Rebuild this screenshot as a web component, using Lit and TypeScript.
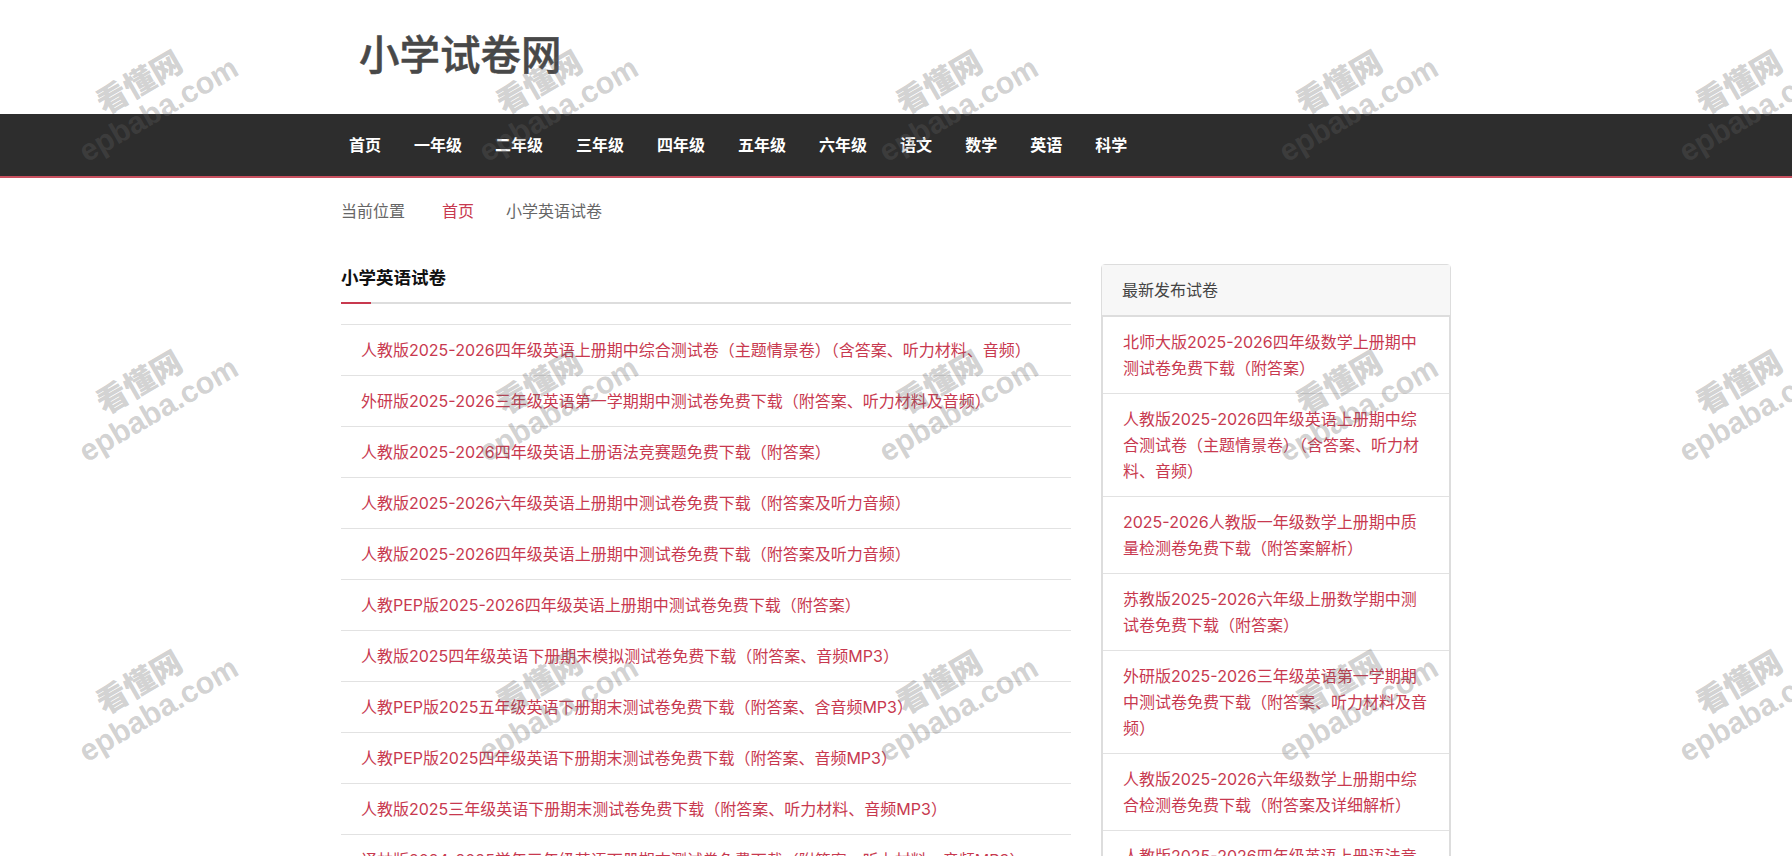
import { LitElement, html, css } from 'lit';
import { customElement } from 'lit/decorators.js';

const NAV = ['首页', '一年级', '二年级', '三年级', '四年级', '五年级', '六年级', '语文', '数学', '英语', '科学'];

const PAPERS = [
  '人教版2025-2026四年级英语上册期中综合测试卷（主题情景卷）（含答案、听力材料、音频）',
  '外研版2025-2026三年级英语第一学期期中测试卷免费下载（附答案、听力材料及音频）',
  '人教版2025-2026四年级英语上册语法竞赛题免费下载（附答案）',
  '人教版2025-2026六年级英语上册期中测试卷免费下载（附答案及听力音频）',
  '人教版2025-2026四年级英语上册期中测试卷免费下载（附答案及听力音频）',
  '人教PEP版2025-2026四年级英语上册期中测试卷免费下载（附答案）',
  '人教版2025四年级英语下册期末模拟测试卷免费下载（附答案、音频MP3）',
  '人教PEP版2025五年级英语下册期末测试卷免费下载（附答案、含音频MP3）',
  '人教PEP版2025四年级英语下册期末测试卷免费下载（附答案、音频MP3）',
  '人教版2025三年级英语下册期末测试卷免费下载（附答案、听力材料、音频MP3）',
  '译林版2024-2025学年三年级英语下册期末测试卷免费下载（附答案、听力材料、音频MP3）',
];

const LATEST = [
  '北师大版2025-2026四年级数学上册期中测试卷免费下载（附答案）',
  '人教版2025-2026四年级英语上册期中综合测试卷（主题情景卷）（含答案、听力材料、音频）',
  '2025-2026人教版一年级数学上册期中质量检测卷免费下载（附答案解析）',
  '苏教版2025-2026六年级上册数学期中测试卷免费下载（附答案）',
  '外研版2025-2026三年级英语第一学期期中测试卷免费下载（附答案、听力材料及音频）',
  '人教版2025-2026六年级数学上册期中综合检测卷免费下载（附答案及详细解析）',
  '人教版2025-2026四年级英语上册语法竞赛题免费下载（附答案）',
];

@customElement('app-root')
export class AppRoot extends LitElement {
  static styles = css`
    :host {
      display: block;
      position: relative;
      height: 856px;
      overflow: hidden;
      background: #fff;
      font-family: Inter, 'Noto Sans CJK SC', sans-serif;
      font-size: 16px;
      line-height: 26px;
      color: #555;
    }

    a {
      color: #c8394f;
      text-decoration: none;
    }

    .header {
      height: 114px;
      padding: 0 0 0 359px;
      display: flex;
      align-items: center;
      box-sizing: border-box;
    }

    .logo {
      font-size: 40.5px;
      line-height: 1;
      font-weight: 500;
      -webkit-text-stroke: 0.5px #484848;
      color: #484848;
      padding-bottom: 2px;
    }

    .nav {
      height: 64px;
      box-sizing: border-box;
      background: #2d2d2d;
      border-bottom: 2px solid #c9505f;
      padding-left: 332.5px;
      display: flex;
      align-items: center;
    }

    .nav a {
      padding: 0 16.5px;
      color: #fff;
      font-weight: 700;
    }

    .crumbs {
      height: 66px;
      padding-left: 341px;
      display: flex;
      align-items: center;
      color: #666;
    }

    .crumbs a {
      margin: 0 32px 0 37px;
    }

    .main {
      margin: 20px 341px 0;
      display: flex;
      gap: 30px;
    }

    .content {
      width: 730px;
      flex: none;
    }

    .title {
      position: relative;
      height: 40px;
      box-sizing: border-box;
      border-bottom: 2px solid #ddd;
      margin-bottom: 20px;
      font-size: 17.5px;
      font-weight: 700;
      color: #111;
      line-height: 28px;
    }

    .title::after {
      content: '';
      position: absolute;
      left: 0;
      bottom: -2px;
      width: 30px;
      height: 2px;
      background: #c8394f;
    }

    .rows {
      border-top: 1px solid #e2e2e2;
    }

    .rows a {
      display: block;
      height: 51px;
      box-sizing: border-box;
      padding: 12px 20px;
      border-bottom: 1px solid #e2e2e2;
      white-space: nowrap;
    }

    .side {
      width: 350px;
      flex: none;
      box-sizing: border-box;
      border: 1px solid #ddd;
      border-radius: 4px 4px 0 0;
    }

    .side-head {
      height: 51px;
      box-sizing: border-box;
      padding: 12px 20px;
      background: #f7f7f7;
      border-bottom: 1px solid #ddd;
      color: #444;
    }

    .side-list {
      border-left: 1px solid #ddd;
      border-right: 1px solid #ddd;
      border-top: 1px solid #ddd;
    }

    .side-list a {
      display: block;
      padding: 12px 19px 12px 20px;
      border-bottom: 1px solid #e2e2e2;
    }

    .marks {
      position: absolute;
      left: -50px;
      top: -55px;
      display: grid;
      grid-template-columns: repeat(5, 400px);
      grid-auto-rows: 300px;
      pointer-events: none;
    }

    .mark {
      display: flex;
      flex-direction: column;
      align-items: center;
      justify-content: center;
      transform: rotate(-30deg);
      font-family: 'Liberation Sans', 'Noto Sans CJK SC', sans-serif;
      font-weight: 700;
      color: rgba(100, 100, 100, 0.3);
    }

    .mark b {
      font-size: 31px;
      line-height: 32px;
      margin-left: -6px;
    }

    .mark span {
      font-size: 30.5px;
      line-height: 30px;
    }
  `;

  render() {
    return html`
      <div class="header"><div class="logo">小学试卷网</div></div>
      <nav class="nav">${NAV.map((n) => html`<a href="#">${n}</a>`)}</nav>
      <div class="crumbs">当前位置<a href="#">首页</a>小学英语试卷</div>
      <div class="main">
        <section class="content">
          <div class="title">小学英语试卷</div>
          <div class="rows">${PAPERS.map((p) => html`<a href="#">${p}</a>`)}</div>
        </section>
        <aside class="side">
          <div class="side-head">最新发布试卷</div>
          <div class="side-list">${LATEST.map((p) => html`<a href="#">${p}</a>`)}</div>
        </aside>
      </div>
      <div class="marks">
        ${Array.from({ length: 15 }).map(
          () => html`<div class="mark"><b>看懂网</b><span>epbaba.com</span></div>`
        )}
      </div>
    `;
  }
}
